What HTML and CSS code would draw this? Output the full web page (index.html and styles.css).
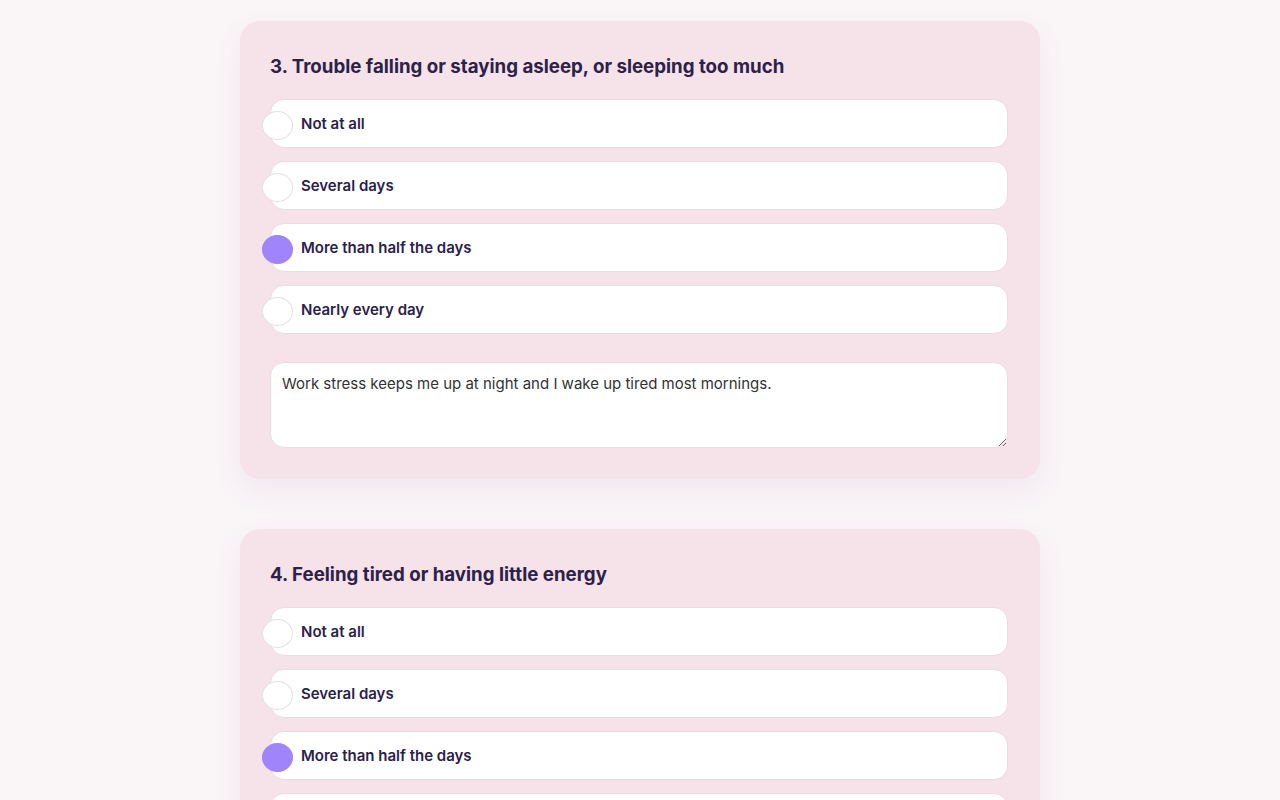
FILE: index.html
```html
<!DOCTYPE html>
<html>
<head>
  <title>Wellbeing Check-in</title>
  <link rel="stylesheet" href="styles.css">
</head>
<body>
  <div class="survey">
    <div class="question">
      <h2>3. Trouble falling or staying asleep, or sleeping too much</h2>
      <label class="option"><input type="radio" name="q3"><span>Not at all</span></label>
      <label class="option"><input type="radio" name="q3"><span>Several days</span></label>
      <label class="option"><input type="radio" name="q3" checked><span>More than half the days</span></label>
      <label class="option"><input type="radio" name="q3"><span>Nearly every day</span></label>
      <textarea class="notes">Work stress keeps me up at night and I wake up tired most mornings.</textarea>
    </div>

    <div class="question">
      <h2>4. Feeling tired or having little energy</h2>
      <label class="option"><input type="radio" name="q4"><span>Not at all</span></label>
      <label class="option"><input type="radio" name="q4"><span>Several days</span></label>
      <label class="option"><input type="radio" name="q4" checked><span>More than half the days</span></label>
      <label class="option"><input type="radio" name="q4"><span>Nearly every day</span></label>
      <textarea class="notes"></textarea>
    </div>
  </div>
</body>
</html>
```

FILE: styles.css
```css
body {
  font-family: Inter, "Noto Sans", sans-serif;
  margin: 0;
  padding: 0;
  background-color: #faf5f7;
  color: #2b2149;
}

.survey {
  width: 800px;
  margin: 0 auto;
  padding-top: 21px;
  display: flex;
  flex-direction: column;
  gap: 50px;
}

.question {
  background-color: #f6e2e9;
  border-radius: 20px;
  padding: 30px 30px 31px;
  display: flex;
  flex-direction: column;
  gap: 13px;
  box-shadow: 0 12px 30px rgba(110, 90, 160, 0.08);
}

.question h2 {
  font-size: 18.7px;
  line-height: 31px;
  font-weight: 700;
  margin: 0 0 4px;
  color: #2b2149;
}

.option {
  display: flex;
  align-items: center;
  height: 47px;
  width: 736px;
  background-color: #fff;
  border: 1px solid #eadbe4;
  border-radius: 14px;
  font-size: 15px;
  font-weight: 600;
  cursor: pointer;
}

.option input {
  appearance: none;
  width: 31px;
  height: 29px;
  margin: 3px 8px 0 -9px;
  border-radius: 50%;
  background-color: #fff;
  border: 1px solid #e6dfe6;
  flex-shrink: 0;
}

.option input:checked {
  background-color: #a084fb;
  border-color: #a084fb;
}

.notes {
  margin-top: 15px;
  width: 738px;
  height: 86px;
  box-sizing: border-box;
  padding: 11px 11px;
  border: 1px solid #eadbe4;
  border-radius: 14px;
  font-family: inherit;
  font-size: 15px;
  color: #333;
  background-color: #fff;
}
```
